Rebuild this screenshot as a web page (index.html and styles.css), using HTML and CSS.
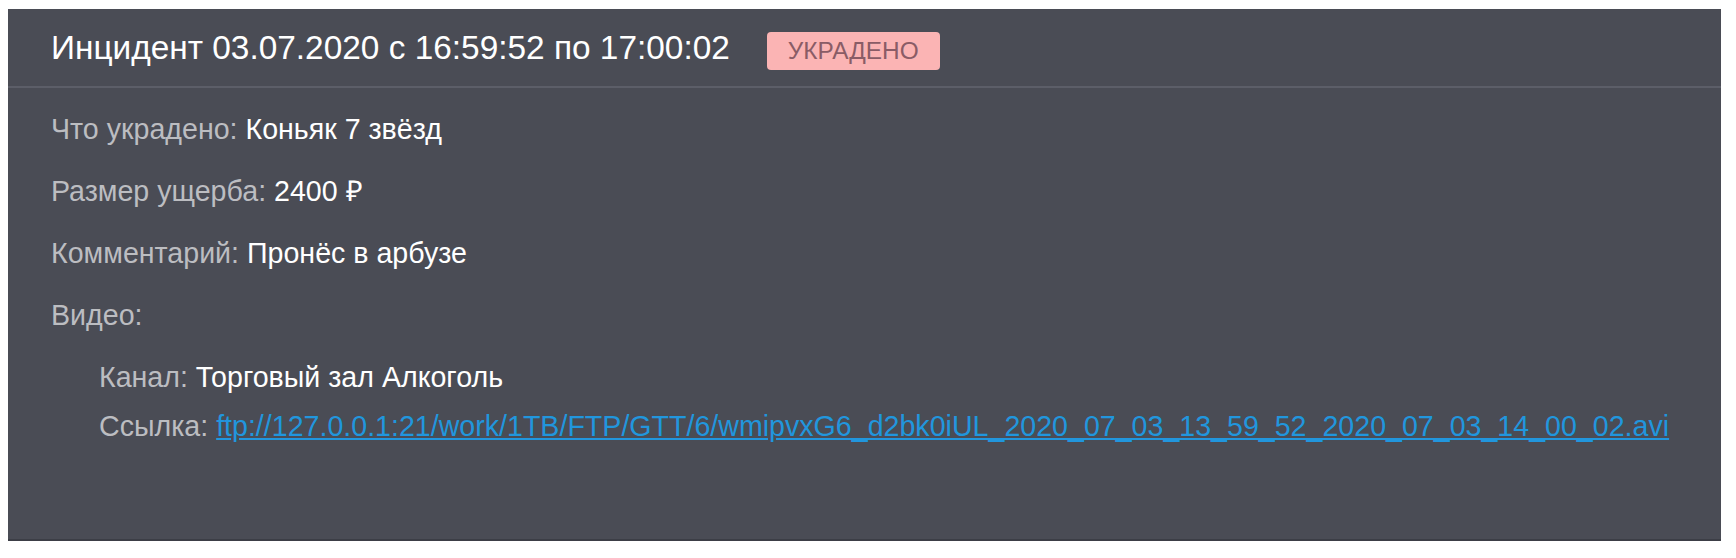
FILE: index.html
```html
<!DOCTYPE html>
<html lang="ru">
<head>
<meta charset="utf-8">
<title>Инцидент</title>
<link rel="stylesheet" href="styles.css">
</head>
<body>
<div class="card">
  <div class="card-header">
    <span class="title">Инцидент 03.07.2020 с 16:59:52 по 17:00:02</span>
    <span class="badge">УКРАДЕНО</span>
  </div>
  <div class="card-body">
    <div class="row"><span class="label">Что украдено:</span> <span class="value">Коньяк 7 звёзд</span></div>
    <div class="row"><span class="label">Размер ущерба:</span> <span class="value">2400 ₽</span></div>
    <div class="row"><span class="label">Комментарий:</span> <span class="value">Пронёс в арбузе</span></div>
    <div class="row"><span class="label">Видео:</span></div>
    <div class="video">
      <div class="row"><span class="label">Канал:</span> <span class="value">Торговый зал Алкоголь</span></div>
      <div class="row"><span class="label">Ссылка:</span> <a class="link" href="#">ftp://127.0.0.1:21/work/1TB/FTP/GTT/6/wmipvxG6_d2bk0iUL_2020_07_03_13_59_52_2020_07_03_14_00_02.avi</a></div>
    </div>
  </div>
</div>
</body>
</html>
```
FILE: styles.css
```css
html, body {
  margin: 0;
  background: #ffffff;
}
body {
  padding: 9px 0 0 8px;
  font-family: "Liberation Sans", Arial, sans-serif;
}
.card {
  width: 1713px;
  height: 532px;
  box-sizing: border-box;
  background: #4a4c55;
  border-bottom: 2px solid #3c3e46;
}
.card-header {
  height: 79px;
  box-sizing: border-box;
  display: flex;
  align-items: center;
  padding-left: 43px;
  border-bottom: 2px solid #5c5e68;
}
.title {
  font-size: 33.4px;
  color: #ffffff;
}
.badge {
  margin-left: 37px;
  margin-top: 6px;
  height: 38px;
  box-sizing: border-box;
  padding: 0 21px;
  display: flex;
  align-items: center;
  background: #fbb4b4;
  border-radius: 4px;
  color: #8a5c66;
  font-size: 24.4px;
}
.card-body {
  padding: 24px 0 0 43px;
  display: flex;
  flex-direction: column;
  gap: 28px;
}
.row {
  font-size: 28.6px;
  line-height: 34px;
  white-space: nowrap;
}
.label {
  color: #bcbdc1;
}
.value {
  color: #ffffff;
}
.video {
  padding-left: 48px;
  display: flex;
  flex-direction: column;
  gap: 15px;
}
.link {
  color: #2196dd;
  text-decoration: underline;
}
```
